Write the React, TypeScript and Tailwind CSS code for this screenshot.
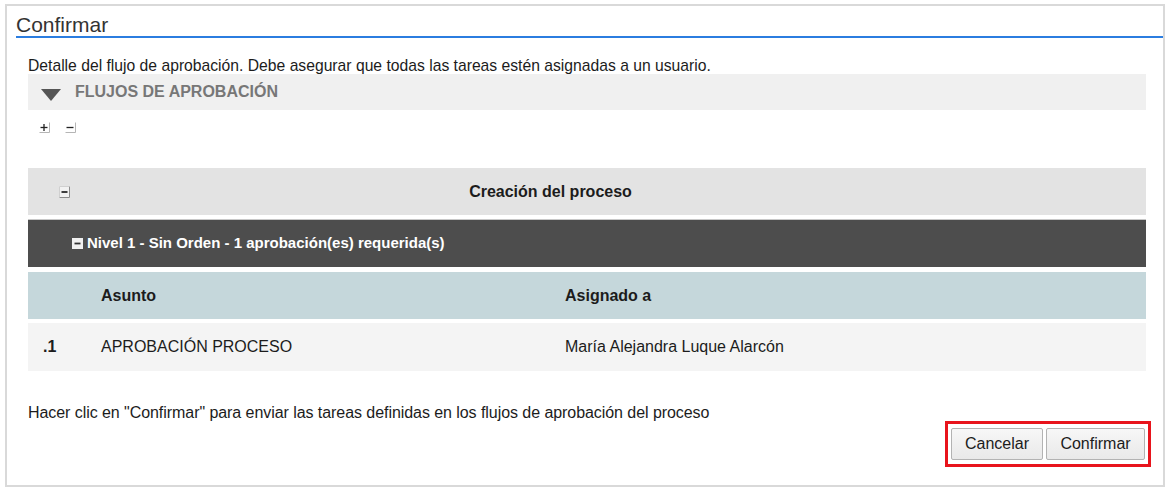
import type { ReactNode } from "react";

function PlusMinus({ plus }: { plus?: boolean }) {
  return (
    <svg width="11" height="11" viewBox="0 0 11 11">
      <path d="M10.5 0.5V10.5H0.5" fill="none" stroke="#b5b5b5" />
      <path d="M1.5 5.5H8.5" stroke="#222" strokeWidth="1.3" />
      {plus && <path d="M5 2V9" stroke="#222" strokeWidth="1.3" />}
    </svg>
  );
}

function BoxMinus({ light }: { light?: boolean }) {
  if (light) {
    return (
      <svg width="11" height="12" viewBox="0 0 11 12">
        <rect x="0" y="0" width="11" height="12" fill="#f2f2f2" />
        <path d="M10.5 0.5V11.5H0.5" fill="none" stroke="#8c8c8c" />
        <path d="M0.5 11V0.5H10" fill="none" stroke="#d0d0d0" />
        <path d="M2.5 6H8.5" stroke="#111" strokeWidth="1.6" />
      </svg>
    );
  }
  return (
    <svg width="11" height="11" viewBox="0 0 11 11">
      <rect x="0" y="0" width="11" height="11" fill="#f0f0f0" />
      <path d="M2.5 5.5H8.5" stroke="#333" strokeWidth="1.8" />
    </svg>
  );
}

function Row({ className, children }: { className: string; children: ReactNode }) {
  return <div className={`flex items-center ${className}`}>{children}</div>;
}

export default function App() {
  return (
    <div
      className="w-[1169px] h-[490px] bg-white pl-[5px] pt-[4px] text-[#1c1c1c]"
      style={{ fontFamily: '"Liberation Sans", Arial, sans-serif' }}
    >
      <div className="w-[1160px] h-[483px] border-2 border-[#d9d9d9] flex flex-col">
        <div className="ml-[9px] pt-[8px] border-b-2 border-[#2b7de0]">
          <h2 className="text-[21px] leading-[22px] text-[#333]">Confirmar</h2>
        </div>

        <div className="pl-[21px] pr-[17px] flex flex-col">
          <p className="mt-[20px] text-[15.7px] leading-[16px]">
            Detalle del flujo de aprobación. Debe asegurar que todas las tareas estén asignadas a un usuario.
          </p>

          <div className="h-[36px] bg-[#f0f0f0] flex items-center">
            <svg width="20" height="12" viewBox="0 0 20 12" className="ml-[13px] mt-[6px]">
              <path d="M0 0H20L10 12Z" fill="#555" />
            </svg>
            <span className="ml-[14px] text-[16px] font-bold text-[#777]">FLUJOS DE APROBACIÓN</span>
          </div>

          <div className="mt-[12px] ml-[11px] flex gap-[15px]">
            <PlusMinus plus />
            <PlusMinus />
          </div>

          <div className="mt-[35px] flex flex-col text-[16px]">
            <Row className="h-[47px] bg-[#e3e3e3]">
              <div className="w-[73px] flex justify-center">
                <BoxMinus light />
              </div>
              <div className="flex-1 flex justify-center pr-[146px] font-bold">Creación del proceso</div>
            </Row>
            <Row className="mt-[4px] h-[48px] bg-[#4d4d4d] border-t border-[#c8c8c8] text-white text-[15px] font-bold pl-[44px] gap-[4px]">
              <BoxMinus />
              <span>Nivel 1 - Sin Orden - 1 aprobación(es) requerida(s)</span>
            </Row>
            <Row className="mt-[5px] h-[47px] bg-[#c5d7db] font-bold">
              <div className="w-[73px]" />
              <div className="w-[464px]">Asunto</div>
              <div>Asignado a</div>
            </Row>
            <Row className="mt-[4px] h-[48px] bg-[#f4f4f4]">
              <div className="w-[73px] pl-[15px] font-bold">.1</div>
              <div className="w-[464px]">APROBACIÓN PROCESO</div>
              <div>María Alejandra Luque Alarcón</div>
            </Row>
          </div>

          <p className="mt-[33px] text-[16px] leading-[18px] tracking-[-0.06px]">
            Hacer clic en "Confirmar" para enviar las tareas definidas en los flujos de aprobación del proceso
          </p>

          <div className="flex justify-end -mr-[5px] -mt-[1px]">
            <div className="border-[3px] border-[#e8141c] px-[3px] py-[4px] flex gap-[3px]">
              <button className="w-[92px] h-[32px] text-[16px] text-[#1c1c1c] border border-[#b3b3b3] rounded-[2px] bg-gradient-to-b from-[#f7f7f7] to-[#e9e9e9]">
                Cancelar
              </button>
              <button className="w-[99px] h-[32px] text-[16px] text-[#1c1c1c] border border-[#b3b3b3] rounded-[2px] bg-gradient-to-b from-[#f7f7f7] to-[#e9e9e9]">
                Confirmar
              </button>
            </div>
          </div>
        </div>
      </div>
    </div>
  );
}
